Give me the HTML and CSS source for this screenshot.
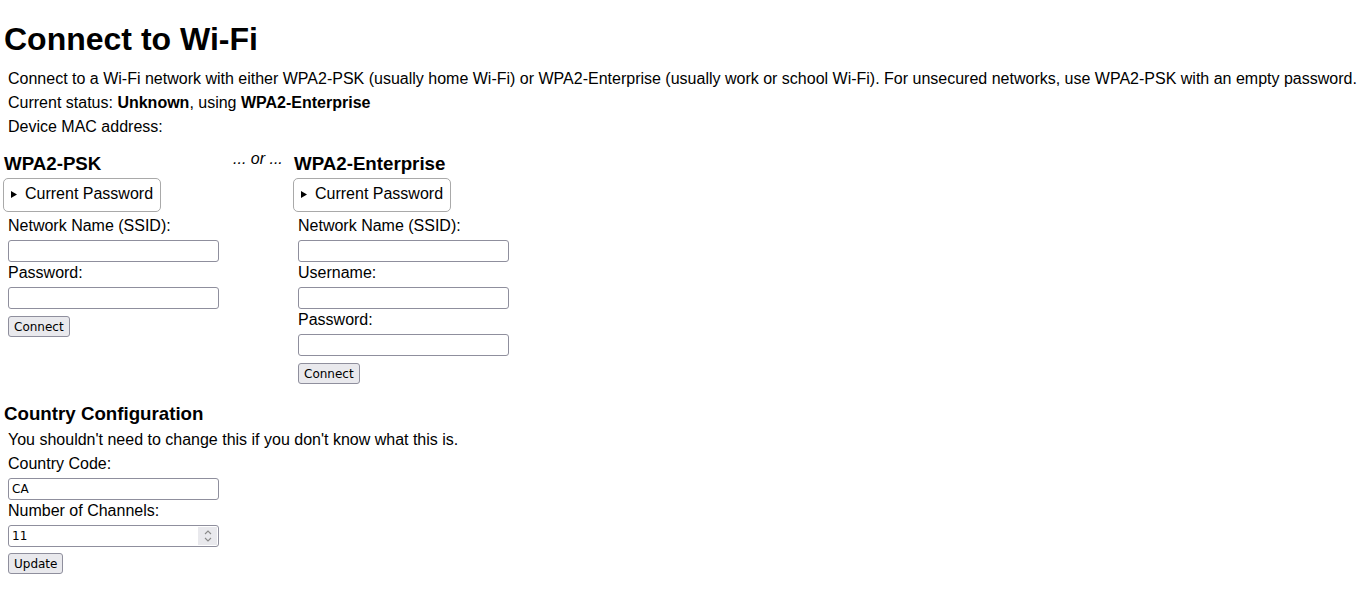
FILE: index.html
```html
<!DOCTYPE html>
<html lang="en">
<head>
<meta charset="utf-8">
<title>Connect to Wi-Fi</title>
<link rel="stylesheet" href="styles.css">
</head>
<body>
<div class="page">
  <h1 class="title">Connect to Wi-Fi</h1>
  <div class="info">
    <div class="line">Connect to a Wi-Fi network with either WPA2-PSK (usually home Wi-Fi) or WPA2-Enterprise (usually work or school Wi-Fi). For unsecured networks, use WPA2-PSK with an empty password.</div>
    <div class="line">Current status: <b>Unknown</b>, using <b>WPA2-Enterprise</b></div>
    <div class="line">Device MAC address:</div>
  </div>

  <div class="row">
    <div class="col col-psk">
      <h3 class="sub">WPA2-PSK</h3>
      <details class="cur">
        <summary class="cur-sum"><svg class="tri" width="6" height="7" viewBox="0 0 6 7"><path d="M0 0 L6 3.5 L0 7 Z" fill="#000"/></svg>Current Password</summary>
      </details>
      <form class="fields">
        <label class="lbl">Network Name (SSID):</label>
        <input class="inp" type="text">
        <label class="lbl">Password:</label>
        <input class="inp" type="password">
        <button class="btn" type="button">Connect</button>
      </form>
    </div>
    <div class="or">... or ...</div>
    <div class="col col-ent">
      <h3 class="sub">WPA2-Enterprise</h3>
      <details class="cur">
        <summary class="cur-sum"><svg class="tri" width="6" height="7" viewBox="0 0 6 7"><path d="M0 0 L6 3.5 L0 7 Z" fill="#000"/></svg>Current Password</summary>
      </details>
      <form class="fields">
        <label class="lbl">Network Name (SSID):</label>
        <input class="inp" type="text">
        <label class="lbl">Username:</label>
        <input class="inp" type="text">
        <label class="lbl">Password:</label>
        <input class="inp" type="password">
        <button class="btn" type="button">Connect</button>
      </form>
    </div>
  </div>

  <h3 class="sub country-h">Country Configuration</h3>
  <div class="info">
    <div class="line">You shouldn't need to change this if you don't know what this is.</div>
  </div>
  <form class="fields country-f">
    <label class="lbl">Country Code:</label>
    <input class="inp" type="text" value="CA">
    <label class="lbl">Number of Channels:</label>
    <div class="num-wrap">
      <input class="inp num" type="text" value="11">
      <span class="spin"><svg width="10" height="16" viewBox="0 0 10 16"><path d="M2 6 L5 3 L8 6" fill="none" stroke="#8a8a8a" stroke-width="1.1"/><path d="M2 10 L5 13 L8 10" fill="none" stroke="#8a8a8a" stroke-width="1.1"/></svg></span>
    </div>
    <button class="btn" type="button">Update</button>
  </form>
</div>
</body>
</html>
```
FILE: styles.css
```css
html, body {
  margin: 0;
  padding: 0;
  background: #fff;
  color: #000;
}
body {
  font-family: "Liberation Sans", Arial, sans-serif;
  font-size: 16px;
}
.page {
  padding: 0 4px;
}
.title {
  font-size: 32px;
  line-height: 37px;
  font-weight: bold;
  margin: 21px 0 9px 0;
}
.info {
  padding-left: 4px;
}
.line {
  height: 24px;
  line-height: 24px;
  white-space: nowrap;
}
.line b {
  font-weight: bold;
}
.row {
  display: flex;
  align-items: flex-start;
  margin-top: 11px;
}
.col-psk {
  width: 229px;
}
.or {
  font-style: italic;
  line-height: 18px;
  width: 50px;
  margin-right: 11px;
  white-space: nowrap;
}
.sub {
  font-size: 18.72px;
  line-height: 22px;
  font-weight: bold;
  margin: 3px 0 3px 0;
}
.cur {
  margin-left: -1px;
  border: 1px solid #a9a9a9;
  border-radius: 5px;
  width: fit-content;
}
.cur-sum {
  list-style: none;
  line-height: 18px;
  padding: 6px 7px 8px 7px;
  display: flex;
  align-items: center;
  cursor: pointer;
}
.cur-sum::-webkit-details-marker {
  display: none;
}
.tri {
  margin: 1px 8px 0 0;
  flex: none;
}
.fields {
  margin: 3px 0 0 0;
  padding-left: 4px;
}
.lbl {
  display: block;
  box-sizing: border-box;
  height: 19px;
  padding-top: 2px;
  line-height: 18px;
  margin-bottom: 6px;
}
.inp {
  display: block;
  box-sizing: border-box;
  width: 211px;
  height: 22px;
  margin: 0;
  padding: 0 3px;
  border: 1px solid #8f8f9d;
  border-radius: 3px;
  background: #fff;
  font-family: "DejaVu Sans", sans-serif;
  font-size: 12px;
  color: #000;
  outline: none;
}
.btn {
  display: block;
  box-sizing: border-box;
  height: 21px;
  margin: 7px 0 0 0;
  padding: 0 5px;
  border: 1px solid #8f8f9d;
  border-radius: 3px;
  background: #e9e9ed;
  font-family: "DejaVu Sans", sans-serif;
  font-size: 12px;
  line-height: 18px;
  color: #000;
}
.country-h {
  margin-top: 19px;
  margin-bottom: 3px;
}
.country-f {
  margin-top: 1px;
}
.country-f .btn {
  margin-top: 6px;
}
.num-wrap {
  position: relative;
  width: 211px;
}
.spin {
  position: absolute;
  top: 2px;
  right: 2px;
  width: 19px;
  height: 18px;
  background: #e9e9ed;
  display: flex;
  align-items: center;
  justify-content: center;
}
```
